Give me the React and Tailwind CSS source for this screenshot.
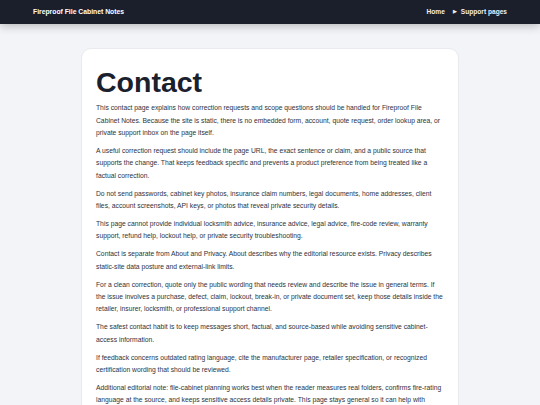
import React from 'react';

const paragraphs = [
  'This contact page explains how correction requests and scope questions should be handled for Fireproof File Cabinet Notes. Because the site is static, there is no embedded form, account, quote request, order lookup area, or private support inbox on the page itself.',
  'A useful correction request should include the page URL, the exact sentence or claim, and a public source that supports the change. That keeps feedback specific and prevents a product preference from being treated like a factual correction.',
  'Do not send passwords, cabinet key photos, insurance claim numbers, legal documents, home addresses, client files, account screenshots, API keys, or photos that reveal private security details.',
  'This page cannot provide individual locksmith advice, insurance advice, legal advice, fire-code review, warranty support, refund help, lockout help, or private security troubleshooting.',
  'Contact is separate from About and Privacy. About describes why the editorial resource exists. Privacy describes static-site data posture and external-link limits.',
  'For a clean correction, quote only the public wording that needs review and describe the issue in general terms. If the issue involves a purchase, defect, claim, lockout, break-in, or private document set, keep those details inside the retailer, insurer, locksmith, or professional support channel.',
  'The safest contact habit is to keep messages short, factual, and source-based while avoiding sensitive cabinet-access information.',
  'If feedback concerns outdated rating language, cite the manufacturer page, retailer specification, or recognized certification wording that should be reviewed.',
  'Additional editorial note: file-cabinet planning works best when the reader measures real folders, confirms fire-rating language at the source, and keeps sensitive access details private. This page stays general so it can help with comparison without replacing manufacturer or professional guidance.',
];

const App = () => (
  <div className="min-h-screen bg-[#f3f4f7] font-['Liberation_Sans',Arial,sans-serif]">
    <header className="relative z-10 flex h-6 items-center justify-between bg-[#1a1f2b] pl-[33px] pr-[33px] shadow-[0_2px_10px_rgba(0,0,0,0.25)]">
      <span className="text-[6.8px] font-bold text-white">Fireproof File Cabinet Notes</span>
      <nav className="flex items-center gap-[8px] text-[6.6px] font-bold text-[#eef0f4]">
        <span>Home</span>
        <span className="flex items-center gap-[4px]">
          <span className="text-[4.5px]">▶</span>
          Support pages
        </span>
      </nav>
    </header>
    <main className="flex justify-center pt-[24px]">
      <article className="w-[378px] rounded-[10px] border border-[#e8eaef] bg-white px-[14px] pt-[16px] pb-6">
        <h1 className="mb-[3px] text-[28.5px] font-bold leading-[1.2] text-[#1a202c]">Contact</h1>
        {paragraphs.map((text) => (
          <p key={text.slice(0, 20)} className="mb-[5.5px] text-[6.75px] leading-[12.4px] text-[#2d3340]">
            {text}
          </p>
        ))}
      </article>
    </main>
  </div>
);

export default App;
